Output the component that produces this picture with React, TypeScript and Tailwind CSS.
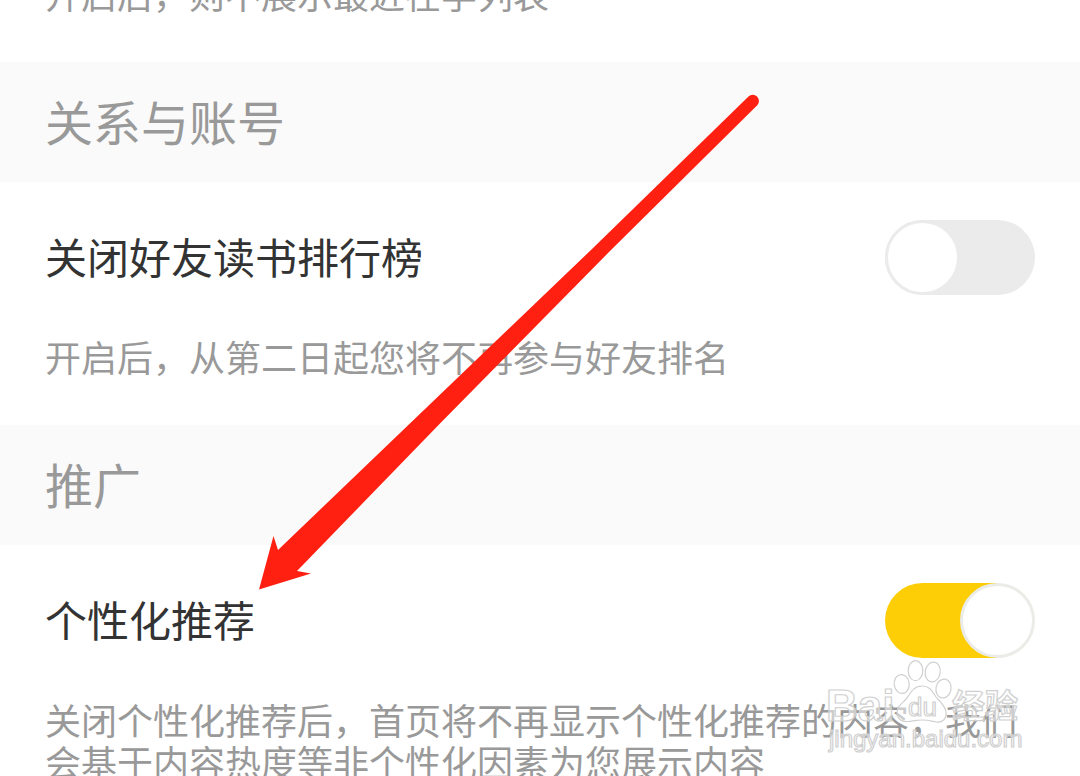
import React from 'react';

interface SettingItem {
  id: string;
  section: string;
  title: string;
  description: string;
  enabled: boolean;
}

const settings: SettingItem[] = [
  {
    id: 'friend-ranking',
    section: '关系与账号',
    title: '关闭好友读书排行榜',
    description: '开启后，从第二日起您将不再参与好友排名',
    enabled: false,
  },
  {
    id: 'personalized',
    section: '推广',
    title: '个性化推荐',
    description:
      '关闭个性化推荐后，首页将不再显示个性化推荐的内容，我们会基于内容热度等非个性化因素为您展示内容',
    enabled: true,
  },
];

// The checked track stops under the middle of the knob, so no yellow shows round its right edge
const Switch: React.FC<{ id: string; enabled: boolean }> = ({ id, enabled }) => (
  <input
    id={id}
    type="checkbox"
    role="switch"
    defaultChecked={enabled}
    className="h-[75px] w-[150px] shrink-0 cursor-pointer appearance-none rounded-full bg-[#ebebeb] before:block before:size-[75px] before:rounded-full before:border-3 before:border-[#ebebeb] before:bg-white before:transition-transform checked:bg-transparent checked:bg-[linear-gradient(90deg,#fdcd06_75%,transparent_75%)] checked:before:translate-x-full checked:before:border-[#ebebe8]"
  />
);

const SettingSection: React.FC<{ item: SettingItem }> = ({ item }) => (
  <section>
    <h2 className="bg-[#fafafa] px-[45px] pt-7 pb-8 text-5xl leading-[60px] text-[#999999]">
      {item.section}
    </h2>
    <div className="px-[45px] pt-[38px] pb-12">
      <div className="flex items-center justify-between">
        <label htmlFor={item.id} className="pb-1 text-[42px] leading-[60px] text-[#333333]">
          {item.title}
        </label>
        <Switch id={item.id} enabled={item.enabled} />
      </div>
      <p className="mt-10 text-4xl leading-[42px] text-[#999999]">{item.description}</p>
    </div>
  </section>
);

// Red pointer towards the personalized setting
const Arrow: React.FC = () => (
  <svg
    className="pointer-events-none absolute top-[90px] left-[250px]"
    width="520"
    height="510"
    viewBox="250 90 520 510"
    aria-hidden="true"
  >
    <path
      d="M259 589.500L273.500 536L278 550L592 249L748.500 96.500A6.200 6.200 0 0 1 757.500 105L610 251L440 423.500L297 571L311 573.500Z"
      fill="#ff2012"
    />
  </svg>
);

const Watermark: React.FC = () => (
  <svg
    className="pointer-events-none absolute right-[50px] bottom-[16px]"
    width="210"
    height="110"
    viewBox="820 650 210 110"
    fill="#ffffff"
    fillOpacity="0.5"
    stroke="#d0d0d0"
    strokeWidth="1.2"
    fontFamily="'Liberation Sans', 'Noto Sans CJK SC', sans-serif"
  >
    <text x="826" y="721" fontSize="44" fontWeight="700">Bai</text>
    <ellipse cx="901.700" cy="684" rx="7.500" ry="9.500" transform="rotate(-8 901.700 684)" />
    <ellipse cx="915.500" cy="670.700" rx="7.300" ry="10" />
    <ellipse cx="932.700" cy="672" rx="7.500" ry="10" transform="rotate(10 932.700 672)" />
    <ellipse cx="943.500" cy="688.500" rx="7.500" ry="9.500" transform="rotate(12 943.500 688.500)" />
    <path d="M922 686C914 686 911 692 907 698C902 704 897 706 897 713C897 719 902 722 908 721.500C913 721 917 720 922 720C928 720 931 721 936 722C942 723 947 719 946 712C945 705 940 702 936 697C932 691 930 686 922 686Z" />
    <text x="908" y="716" fontSize="26">du</text>
    <text x="952" y="718" fontSize="33" fontWeight="700">经验</text>
    <text x="829" y="747" fontSize="24">jingyan.baidu.com</text>
  </svg>
);

export default function App() {
  return (
    <main
      lang="zh-CN"
      className="relative h-screen overflow-hidden bg-white font-['Noto_Sans_CJK_SC',sans-serif]"
    >
      {/* Tail of the previous setting, scrolled under the top edge */}
      <div className="flex h-[62px] flex-col justify-end px-[45px] pb-12">
        <p className="text-4xl leading-[42px] text-[#999999]">开启后，则不展示最近在学列表</p>
      </div>

      {settings.map((item) => (
        <SettingSection key={item.id} item={item} />
      ))}

      <Arrow />
      <Watermark />
    </main>
  );
}
